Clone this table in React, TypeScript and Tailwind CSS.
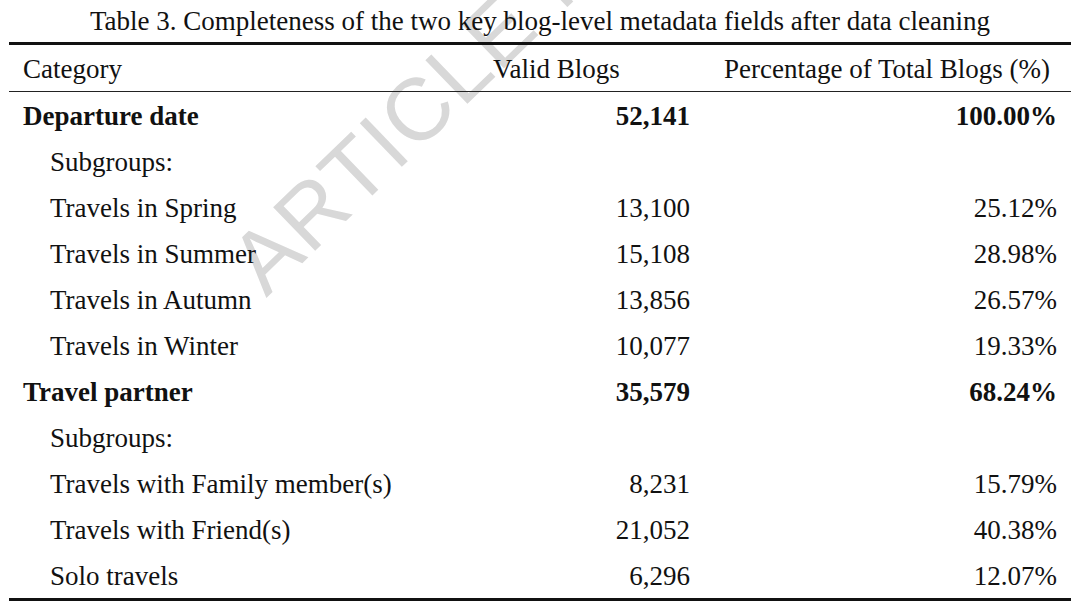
type Row = {
  label: string
  valid?: string
  pct?: string
  bold?: boolean
}

const rows: Row[] = [
  { label: 'Departure date', valid: '52,141', pct: '100.00%', bold: true },
  { label: 'Subgroups:' },
  { label: 'Travels in Spring', valid: '13,100', pct: '25.12%' },
  { label: 'Travels in Summer', valid: '15,108', pct: '28.98%' },
  { label: 'Travels in Autumn', valid: '13,856', pct: '26.57%' },
  { label: 'Travels in Winter', valid: '10,077', pct: '19.33%' },
  { label: 'Travel partner', valid: '35,579', pct: '68.24%', bold: true },
  { label: 'Subgroups:' },
  { label: 'Travels with Family member(s)', valid: '8,231', pct: '15.79%' },
  { label: 'Travels with Friend(s)', valid: '21,052', pct: '40.38%' },
  { label: 'Solo travels', valid: '6,296', pct: '12.07%' },
]

export default function App() {
  return (
    <div className="relative w-[1080px] h-[609px] overflow-hidden bg-white text-[#111] font-['Liberation_Serif',serif]">
      {/* watermark */}
      <div className="pointer-events-none absolute left-[276px] top-[220px] origin-bottom-left rotate-[-44deg] whitespace-nowrap font-['Liberation_Sans',sans-serif] text-[88px] leading-none tracking-[2px] text-[#d8d8d8]">
        ARTICLE IN PRESS
      </div>

      <div className="relative">
        <div className="h-[42px] flex items-center justify-center text-[27px] leading-none">
          Table 3. Completeness of the two key blog-level metadata fields after data cleaning
        </div>

        <div className="mx-[9px] border-t-[3px] border-b-[3px] border-[#111] text-[27px] leading-none">
          <div className="grid grid-cols-[471px_220px_1fr] h-[47px] items-center border-b border-[#222] pt-[2px]">
            <div className="pl-[14px]">Category</div>
            <div className="pl-[13px]">Valid Blogs</div>
            <div className="pl-[24px]">Percentage of Total Blogs (%)</div>
          </div>
          {rows.map((r, i) => (
            <div
              key={i}
              className={`grid grid-cols-[471px_220px_1fr] h-[46px] items-center pt-[3px] ${r.bold ? 'font-bold' : ''}`}
            >
              <div className={r.bold ? 'pl-[14px]' : 'pl-[41px]'}>{r.label}</div>
              <div className="text-right pr-[10px]">{r.valid}</div>
              <div className="text-right pr-[14px]">{r.pct}</div>
            </div>
          ))}
        </div>
      </div>
    </div>
  )
}
